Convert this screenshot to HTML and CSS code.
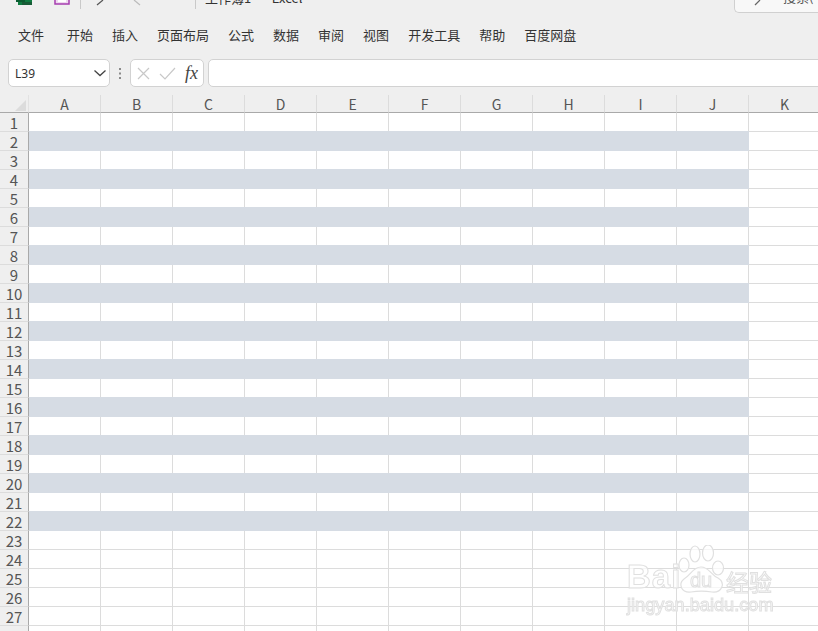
FILE: index.html
```html
<!DOCTYPE html>
<html lang="zh-CN">
<head>
<meta charset="utf-8">
<title>工作簿1 - Excel</title>
<link rel="stylesheet" href="styles.css">
</head>
<body>
<header class="titlebar">
  <svg class="quick" width="190" height="9" viewBox="0 0 190 9">
    <rect x="18" y="0" width="14" height="5" fill="#107c41"/>
    <rect x="16" y="0" width="9" height="2" fill="#0b5c31"/>
    <rect x="22" y="2" width="10" height="3" fill="#185c37"/>
    <rect x="55" y="-3" width="14" height="7" fill="#f0d8f0" stroke="#a63eb0" stroke-width="1.5"/>
    <rect x="58" y="-3" width="8" height="5" fill="#fff"/>
    <rect x="80" y="0" width="1" height="9" fill="#c9c9c9"/>
    <path d="M97 5 L103 0" stroke="#555" stroke-width="1.2" fill="none"/>
    <path d="M134 0 L140 5" stroke="#bbb" stroke-width="1.2" fill="none"/>
  </svg>
  <div class="sep"></div>
  <div class="doc-title"><span>工作簿1</span><span>-</span><span>Excel</span></div>
  <div class="search">
    <svg width="8" height="6" viewBox="0 0 8 6"><path d="M1 5 L6 0" stroke="#666" stroke-width="1.2" fill="none"/></svg>
    <span class="search-text">搜索(</span>
  </div>
</header>

<nav class="menu">
  <span class="tab first">文件</span>
  <span class="tab">开始</span>
  <span class="tab">插入</span>
  <span class="tab">页面布局</span>
  <span class="tab">公式</span>
  <span class="tab">数据</span>
  <span class="tab">审阅</span>
  <span class="tab">视图</span>
  <span class="tab">开发工具</span>
  <span class="tab">帮助</span>
  <span class="tab">百度网盘</span>
</nav>

<section class="formula">
  <div class="box namebox">
    <span>L39</span>
    <svg width="14" height="8" viewBox="0 0 14 8"><path d="M1.5 1.5 L7 6.5 L12.5 1.5" stroke="#444" stroke-width="1.3" fill="none"/></svg>
  </div>
  <svg class="grip" width="4" height="11" viewBox="0 0 4 11"><g fill="#8a8a8a"><rect x="1" y="0" width="2" height="2"/><rect x="1" y="4.5" width="2" height="2"/><rect x="1" y="9" width="2" height="2"/></g></svg>
  <div class="box fxbox">
    <svg width="13" height="13" viewBox="0 0 13 13"><path d="M1 1 L12 12 M12 1 L1 12" stroke="#c8c8c8" stroke-width="1.2" fill="none"/></svg>
    <svg width="17" height="13" viewBox="0 0 17 13"><path d="M1 7 L6 12 L16 1" stroke="#c8c8c8" stroke-width="1.2" fill="none"/></svg>
    <span class="fx">fx</span>
  </div>
  <div class="box input"></div>
</section>

<main class="sheet">
<table class="grid">
<thead><tr><th class="corner"><svg width="11" height="11" viewBox="0 0 11 11"><path d="M11 0 V11 H0 Z" fill="#dcdcdc"/></svg></th><th>A</th><th>B</th><th>C</th><th>D</th><th>E</th><th>F</th><th>G</th><th>H</th><th>I</th><th>J</th><th>K</th></tr></thead>
<tbody>
<tr><th>1</th><td></td><td></td><td></td><td></td><td></td><td></td><td></td><td></td><td></td><td></td><td></td></tr>
<tr class="band"><th>2</th><td></td><td></td><td></td><td></td><td></td><td></td><td></td><td></td><td></td><td></td><td class="out"></td></tr>
<tr><th>3</th><td></td><td></td><td></td><td></td><td></td><td></td><td></td><td></td><td></td><td></td><td></td></tr>
<tr class="band"><th>4</th><td></td><td></td><td></td><td></td><td></td><td></td><td></td><td></td><td></td><td></td><td class="out"></td></tr>
<tr><th>5</th><td></td><td></td><td></td><td></td><td></td><td></td><td></td><td></td><td></td><td></td><td></td></tr>
<tr class="band"><th>6</th><td></td><td></td><td></td><td></td><td></td><td></td><td></td><td></td><td></td><td></td><td class="out"></td></tr>
<tr><th>7</th><td></td><td></td><td></td><td></td><td></td><td></td><td></td><td></td><td></td><td></td><td></td></tr>
<tr class="band"><th>8</th><td></td><td></td><td></td><td></td><td></td><td></td><td></td><td></td><td></td><td></td><td class="out"></td></tr>
<tr><th>9</th><td></td><td></td><td></td><td></td><td></td><td></td><td></td><td></td><td></td><td></td><td></td></tr>
<tr class="band"><th>10</th><td></td><td></td><td></td><td></td><td></td><td></td><td></td><td></td><td></td><td></td><td class="out"></td></tr>
<tr><th>11</th><td></td><td></td><td></td><td></td><td></td><td></td><td></td><td></td><td></td><td></td><td></td></tr>
<tr class="band"><th>12</th><td></td><td></td><td></td><td></td><td></td><td></td><td></td><td></td><td></td><td></td><td class="out"></td></tr>
<tr><th>13</th><td></td><td></td><td></td><td></td><td></td><td></td><td></td><td></td><td></td><td></td><td></td></tr>
<tr class="band"><th>14</th><td></td><td></td><td></td><td></td><td></td><td></td><td></td><td></td><td></td><td></td><td class="out"></td></tr>
<tr><th>15</th><td></td><td></td><td></td><td></td><td></td><td></td><td></td><td></td><td></td><td></td><td></td></tr>
<tr class="band"><th>16</th><td></td><td></td><td></td><td></td><td></td><td></td><td></td><td></td><td></td><td></td><td class="out"></td></tr>
<tr><th>17</th><td></td><td></td><td></td><td></td><td></td><td></td><td></td><td></td><td></td><td></td><td></td></tr>
<tr class="band"><th>18</th><td></td><td></td><td></td><td></td><td></td><td></td><td></td><td></td><td></td><td></td><td class="out"></td></tr>
<tr><th>19</th><td></td><td></td><td></td><td></td><td></td><td></td><td></td><td></td><td></td><td></td><td></td></tr>
<tr class="band"><th>20</th><td></td><td></td><td></td><td></td><td></td><td></td><td></td><td></td><td></td><td></td><td class="out"></td></tr>
<tr><th>21</th><td></td><td></td><td></td><td></td><td></td><td></td><td></td><td></td><td></td><td></td><td></td></tr>
<tr class="band"><th>22</th><td></td><td></td><td></td><td></td><td></td><td></td><td></td><td></td><td></td><td></td><td class="out"></td></tr>
<tr><th>23</th><td></td><td></td><td></td><td></td><td></td><td></td><td></td><td></td><td></td><td></td><td></td></tr>
<tr><th>24</th><td></td><td></td><td></td><td></td><td></td><td></td><td></td><td></td><td></td><td></td><td></td></tr>
<tr><th>25</th><td></td><td></td><td></td><td></td><td></td><td></td><td></td><td></td><td></td><td></td><td></td></tr>
<tr><th>26</th><td></td><td></td><td></td><td></td><td></td><td></td><td></td><td></td><td></td><td></td><td></td></tr>
<tr><th>27</th><td></td><td></td><td></td><td></td><td></td><td></td><td></td><td></td><td></td><td></td><td></td></tr>
<tr><th></th><td></td><td></td><td></td><td></td><td></td><td></td><td></td><td></td><td></td><td></td><td></td></tr>
</tbody>
</table>
<div class="watermark">
  <div class="wm-logo">
    <span class="wm-bai">Bai</span>
    <div class="wm-paw">
      <svg width="48" height="50" viewBox="0 0 48 50">
        <g fill="rgba(255,255,255,.75)" stroke="#e0e0e0" stroke-width="1.2">
          <ellipse cx="6" cy="20" rx="5" ry="7"/>
          <ellipse cx="17" cy="9" rx="5" ry="8"/>
          <ellipse cx="30" cy="8" rx="5.5" ry="8"/>
          <ellipse cx="40" cy="23" rx="5.5" ry="7"/>
          <path d="M23 22 C31 22 33 30 40 33 C48 38 44 48 34 47 C28 46 19 46 13 47 C3 48 0 39 6 34 C13 30 15 22 23 22 Z"/>
        </g>
      </svg>
      <span class="wm-du">du</span>
    </div>
    <span class="wm-cn">经验</span>
  </div>
  <div class="wm-url">jingyan.baidu.com</div>
</div>
</main>
</body>
</html>
```

FILE: styles.css
```css
* { box-sizing: border-box; }
html, body { margin: 0; height: 100%; }
body {
  width: 818px;
  height: 631px;
  overflow: hidden;
  background: #efefef;
  color: #333;
  font-family: "Noto Sans CJK SC", "Noto Sans", sans-serif;
}

/* clipped title bar */
.titlebar { display: flex; height: 13px; overflow: hidden; }
.quick { flex: none; }
.sep { flex: none; width: 1px; height: 9px; margin-left: 5px; background: #c9c9c9; }
.doc-title {
  display: flex;
  gap: 8px;
  height: 20px;
  margin: -12px 0 0 9px;
  font-size: 13px;
  line-height: 20px;
  color: #333;
  white-space: nowrap;
}
.search {
  display: flex;
  align-items: flex-start;
  gap: 21px;
  margin-left: auto;
  width: 84px;
  height: 13px;
  padding-left: 19px;
  background: #f8f8f8;
  border: 1px solid #d0d0d0;
  border-width: 0 0 1px 1px;
  border-bottom-left-radius: 5px;
}
.search-text { margin-top: -13px; font-size: 13px; line-height: 20px; color: #555; }

/* ribbon tabs */
.menu {
  display: flex;
  gap: 19px;
  height: 46px;
  padding: 12px 0 0 18px;
  font-size: 13px;
  line-height: 20px;
  color: #333;
}
.tab.first { margin-right: 4px; }

/* formula bar */
.formula { display: flex; align-items: center; height: 28px; padding-left: 8px; }
.box {
  display: flex;
  flex: none;
  align-items: center;
  height: 28px;
  background: #fff;
  border: 1px solid #d2d2d2;
  border-radius: 5px;
}
.namebox {
  justify-content: space-between;
  width: 102px;
  padding: 0 2px 0 6px;
  font-family: "Noto Sans", sans-serif;
  font-size: 12px;
  color: #333;
}
.grip { flex: none; margin: 0 8px; }
.fxbox { width: 74px; padding-left: 6px; }
.fxbox svg:nth-child(2) { margin-left: 9px; }
.fx {
  margin-left: 9px;
  font-family: "Liberation Serif", serif;
  font-style: italic;
  font-size: 18px;
  color: #444;
}
.input { width: 620px; margin-left: 4px; }

/* sheet */
.sheet { position: relative; margin-top: 8px; }
.grid {
  width: 821px;
  table-layout: fixed;
  border-collapse: separate;
  border-spacing: 0;
}
.grid th, .grid td { padding: 0; }
.grid thead th {
  width: 72px;
  height: 18px;
  padding-top: 2px;
  font-weight: 400;
  font-size: 14px;
  line-height: 15px;
  color: #555;
  background: #efefef;
  border-right: 1px solid #dcdcdc;
  border-bottom: 1px solid #a9a9a9;
}
.grid thead th.corner {
  width: 29px;
  padding-top: 0;
  border-right: 1px solid #e2e2e2;
}
.corner svg { display: block; margin: 3px 0 0 15px; }
.grid tbody th {
  height: 19px;
  padding-top: 1px;
  font-weight: 400;
  font-size: 15px;
  line-height: 17px;
  color: #555;
  background: #efefef;
  border-right: 1px solid #a9a9a9;
  border-bottom: 1px solid #dcdcdc;
}
.grid td {
  height: 19px;
  background: #fff;
  border-right: 1px solid #dcdcdc;
  border-bottom: 1px solid #dcdcdc;
}
.band td {
  background: #d6dce4;
  border-color: #d6dce4;
  box-shadow: 0 -1px 0 #d6dce4;
}
.band td.out {
  background: #fff;
  border-color: #dcdcdc;
  box-shadow: none;
}

/* watermark overlay */
.watermark {
  position: absolute;
  left: 627px;
  top: 448px;
  width: 148px;
  filter: blur(0.3px);
}
.wm-logo { display: flex; align-items: flex-end; height: 52px; }
.wm-bai, .wm-du, .wm-cn, .wm-url {
  color: rgba(255, 255, 255, .75);
  -webkit-text-stroke: 1px #e0e0e0;
}
.wm-bai {
  width: 51px;
  font-family: "Liberation Sans", sans-serif;
  font-weight: 700;
  font-size: 33px;
  line-height: 36px;
  letter-spacing: 1px;
}
.wm-paw { position: relative; flex: none; width: 48px; height: 50px; }
.wm-paw svg { display: block; }
.wm-du {
  position: absolute;
  left: 12px;
  top: 24px;
  font-family: "Liberation Sans", sans-serif;
  font-size: 20px;
  line-height: 22px;
}
.wm-cn { font-size: 23px; line-height: 28px; white-space: nowrap; }
.wm-url {
  margin-top: 1px;
  font-family: "Liberation Sans", sans-serif;
  font-size: 18.2px;
  line-height: 18px;
  white-space: nowrap;
}
```
